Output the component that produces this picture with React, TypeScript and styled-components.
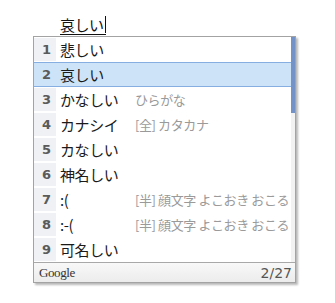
import React from "react";
import styled, { createGlobalStyle } from "styled-components";

const Global = createGlobalStyle`
  html, body { margin: 0; padding: 0; background: #ffffff; }
  body { font-family: "Noto Sans CJK JP", "Noto Sans", sans-serif; }
`;

const Page = styled.div`
  padding-top: 14px;
  width: 335px;
  height: 303px;
  box-sizing: border-box;
`;

const InputLine = styled.div`
  margin-left: 60px;
  display: flex;
  align-items: flex-end;
  height: 21px;
`;

const Composing = styled.span`
  font-size: 15px;
  line-height: 19px;
  color: #111;
  border-bottom: 1px solid #111;
  letter-spacing: -0.5px;
  display: flex;
  align-items: flex-end;
`;

const Caret = styled.span`
  width: 1px;
  height: 17px;
  background: #111;
  margin-left: 1px;
  margin-bottom: 1px;
`;

const Popup = styled.div`
  margin-left: 33px;
  margin-top: 1px;
  width: 263px;
  border: 1px solid #a3a3a3;
  background: #fff;
  box-shadow: 2px 2px 2px rgba(0, 0, 0, 0.28);
  box-sizing: border-box;
`;

const Body = styled.div`
  display: flex;
`;

const List = styled.div`
  flex: 1;
  display: flex;
  flex-direction: column;
`;

const Row = styled.div<{ $active?: boolean }>`
  display: grid;
  grid-template-columns: 22px 79px 1fr;
  height: 25px;
  box-sizing: border-box;
  align-items: center;
  background: ${(p) => (p.$active ? "#cde4f8" : "transparent")};
  border-top: 1px solid ${(p) => (p.$active ? "#86aee0" : "transparent")};
  border-bottom: 1px solid ${(p) => (p.$active ? "#86aee0" : "transparent")};
`;

const Num = styled.div<{ $active?: boolean }>`
  height: 100%;
  display: flex;
  align-items: center;
  justify-content: center;
  padding-left: 3px;
  box-sizing: border-box;
  background: ${(p) => (p.$active ? "transparent" : "#eff1f5")};
  font-family: "DejaVu Sans", "Liberation Sans", sans-serif;
  font-weight: bold;
  font-size: 13px;
  color: #5a5a5a;
`;

const Cand = styled.div`
  padding-left: 4px;
  font-size: 15px;
  color: #1a1a1a;
  white-space: nowrap;
  letter-spacing: -0.4px;
`;

const Note = styled.div`
  font-size: 13px;
  color: #9a9a9a;
  white-space: nowrap;
  letter-spacing: -0.4px;
`;

const Track = styled.div`
  width: 4px;
  background: #f2f2f2;
  display: flex;
  flex-direction: column;
`;

const Thumb = styled.div`
  height: 76px;
  background: #7292c8;
`;

const Footer = styled.div`
  border-top: 1px solid #a8a8a8;
  height: 20px;
  box-sizing: border-box;
  display: flex;
  align-items: center;
  justify-content: space-between;
  padding: 0 3px 0 5px;
  background: linear-gradient(#f8f8f8, #ececec);
`;

const Brand = styled.span`
  font-family: "Liberation Serif", "DejaVu Serif", serif;
  font-size: 13px;
  color: #333;
  letter-spacing: -0.4px;
`;

const Count = styled.span`
  font-family: "DejaVu Sans", "Liberation Sans", sans-serif;
  font-size: 14px;
  color: #555;
`;

const items: { n: number; c: string; note?: string }[] = [
  { n: 1, c: "悲しい" },
  { n: 2, c: "哀しい" },
  { n: 3, c: "かなしい", note: "ひらがな" },
  { n: 4, c: "カナシイ", note: "[全] カタカナ" },
  { n: 5, c: "カなしい" },
  { n: 6, c: "神名しい" },
  { n: 7, c: ":(", note: "[半] 顔文字 よこおき おこる" },
  { n: 8, c: ":-(", note: "[半] 顔文字 よこおき おこる" },
  { n: 9, c: "可名しい" },
];

export default function App() {
  return (
    <Page>
      <Global />
      <InputLine>
        <Composing>
          哀しい
          <Caret />
        </Composing>
      </InputLine>
      <Popup>
        <Body>
          <List>
            {items.map((it) => (
              <Row key={it.n} $active={it.n === 2}>
                <Num $active={it.n === 2}>{it.n}</Num>
                <Cand>{it.c}</Cand>
                <Note>{it.note ?? ""}</Note>
              </Row>
            ))}
          </List>
          <Track>
            <Thumb />
          </Track>
        </Body>
        <Footer>
          <Brand>Google</Brand>
          <Count>2/27</Count>
        </Footer>
      </Popup>
    </Page>
  );
}
